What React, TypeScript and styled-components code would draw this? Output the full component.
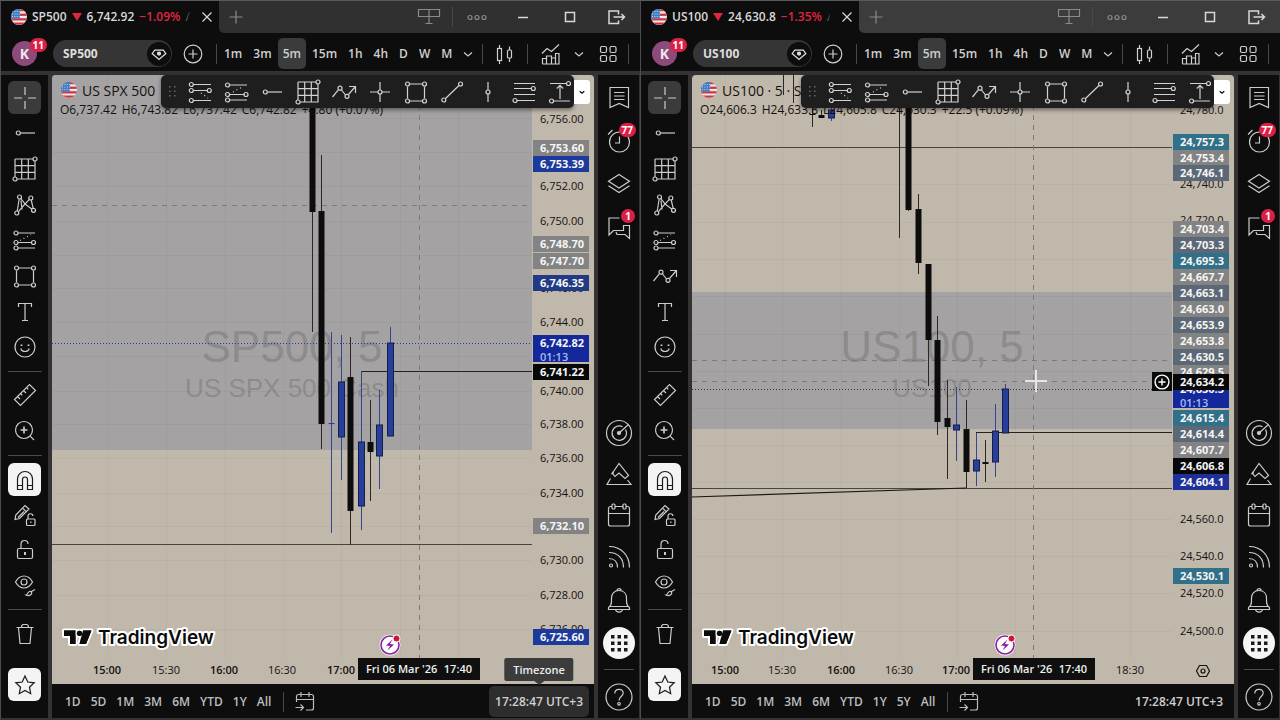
import React from "react";
import styled, { createGlobalStyle, css } from "styled-components";

const GlobalStyle = createGlobalStyle`
  *, *::before, *::after { box-sizing: border-box; }
  html, body { margin: 0; background: #2c2b2b; }
  body, button, input { font-family: "Open Sans", "Noto Sans", sans-serif; }
  button { border: 0; padding: 0; background: none; color: inherit; cursor: pointer; }
  svg { display: block; flex: none; }
  p { margin: 0; }
`;

/* ---------- icons ---------- */

const Dot = ({ x, y, r = 2 }: { x: number; y: number; r?: number }) => <circle cx={x} cy={y} r={r} />;

const icons: Record<string, React.ReactNode> = {
  cross: <path d="M14 3v8M14 17v8M3 14h8M17 14h8" />,
  crossNode: <><path d="M14 4v8M14 16v8M4 14h8M16 14h8" /><Dot x={14} y={14} /></>,
  hline: <><path d="M9.3 14H24" /><Dot x={7.3} y={14} /></>,
  vline: <><path d="M14 4v8M14 16v8" /><Dot x={14} y={14} /></>,
  grid: <><path d="M4 4h18M24 6v18H6M4 22V4M4 10.7h20M4 17.3h20M10.7 4v20M17.3 4v20" /><Dot x={24} y={4} /><Dot x={4} y={24} /></>,
  pattern: <><path d="M6.2 20 8.2 8M9.8 7.5 14 13l-6.6 7.6M14 13l4.4-4.6M20.2 9l2 8.4M14 13l7 5.2M10 9.500l1 9" /><Dot x={8.5} y={6} /><Dot x={19.8} y={7} /><Dot x={22.5} y={19.3} /><Dot x={5.8} y={22} /></>,
  fibA: <><path d="M7 7h17M7 16.500h13.500M7 22h17" /><path d="m9 14.500 11-6" strokeDasharray="1 3" /><Dot x={5} y={7} /><Dot x={5} y={16.5} /><Dot x={22.5} y={16.5} /><Dot x={5} y={22} /></>,
  fibB: <><path d="M7.300 6.500H25M7.300 12.500h14M7.300 22.500H25" /><path d="m15 15 7 5" strokeDasharray="1 3" /><Dot x={5.3} y={6.500} /><Dot x={5.3} y={12.5} /><Dot x={23.3} y={12.5} /><Dot x={5.3} y={22.5} /></>,
  fibC: <><path d="M7.500 7H25M7.500 16.500h15M7.500 22H25" /><path d="m11 14 10-5.500" strokeDasharray="1 3" /><Dot x={5.5} y={7} /><Dot x={5.5} y={16.5} /><Dot x={24} y={16.5} /><Dot x={5.5} y={22} /></>,
  rect: <><path d="M8 6h12M8 23h12M5.500 8.500v12M22.500 8.500v12" /><Dot x={5.5} y={6} /><Dot x={22.5} y={6} /><Dot x={5.5} y={23} /><Dot x={22.5} y={23} /></>,
  poly: <><path d="m2.500 19 6-7.300M11.500 12l4 5M18.500 16.500 25 9M19 8.500h6.500V15" /><Dot x={10} y={10.2} /><Dot x={17} y={18.3} /></>,
  trend: <><path d="M7.500 20.500 21 7.500" /><Dot x={22.5} y={6} /><Dot x={5.8} y={22} /></>,
  levels: <><path d="M4 5.500h21M4 10.500h17M4 16.500h21M7 22.500h18" /><Dot x={23.3} y={10.5} /><Dot x={5} y={22.5} /></>,
  range: <><path d="M4 5.500h17M7 23h17M14 8v13M10.800 10.500 14 7.300l3.200 3.200" /><Dot x={22.5} y={5.5} /><Dot x={5.5} y={23} /></>,
  text: <path d="M7.500 9V5.500h13V9M14 5.500V22M11 22.500h6" />,
  smile: <><circle cx="14" cy="14" r="10" /><path d="M9.800 15.500c.5 2.300 2 3 4.200 3s3.700-.7 4.200-3" /><path d="M10.500 11.500v1.500M17.500 11.500v1.500" strokeWidth="1.800" /></>,
  ruler: <path d="m3.500 18.500 15-15 6 6-15 15zM6.500 15.500l2.500 2.500M9.500 12.500l1.800 1.800M12.500 9.500l2.500 2.500M15.500 6.500l1.800 1.800" />,
  zoom: <><circle cx="13" cy="13" r="8.500" /><path d="m19.200 19.200 3.800 3.800" /><path d="M13 9.500v7M9.500 13h7" strokeWidth="1.700" /></>,
  magnet: <path d="M6.500 23.500V13a7.500 7.500 0 0 1 15 0v10.500h-5V13.500a2.500 2.500 0 0 0-5 0v10zM6.500 19.500h5M16.500 19.500h5" />,
  pencilLock: <><path d="m4 18.500.8-4.500L14 4.500l4 3.500-9.500 9.500zM11.500 7l4 4M7 16.500l6-6" /><rect x="15.500" y="18" width="8.500" height="6.500" rx="1" /><path d="M17 18v-2.500a2.500 2.500 0 0 1 5-.5M19.800 20.500v1.500" /></>,
  lock: <><rect x="6.500" y="12.500" width="15" height="10" rx="1.500" /><path d="M10 12.500V8.200C10 6 11.500 4.500 13.500 4.500S17 5.800 17 8" /><path d="M14 16v3" strokeWidth="2" /></>,
  eye: <><path d="M4.500 11C7 6.500 10 5 13 5s6 1.500 8.500 6c-2.500 4.500-5.500 6-8.500 6s-6-1.500-8.500-6z" /><circle cx="13" cy="11" r="3" /><path d="M15 24c2-.3 1.500-3 3.500-3.500s3 1.500 1.500 3-3.500 1.300-5 .5zM20.500 20.500l3.500-2" /></>,
  trash: <path d="M5.500 7.500h17M7.500 7.500l1.500 16h10l1.500-16M10.500 7.500C10.500 5.500 11 4.500 12.500 4.500h3c1.500 0 2 1 2 3" />,
  star: <path d="m14 5 2.800 6 6.400.8-4.700 4.400 1.200 6.500-5.700-3.200-5.700 3.200 1.200-6.500-4.700-4.400 6.400-.8z" />,
  notes: <path d="M5 4.500h18.500v20l-9.300-4-9.200 4zM9 9.500h10.500M9 13h10.500M9 16.500h10.500" />,
  alarm: <><circle cx="14.500" cy="15" r="10" /><path d="M14.500 9.500v6.500H10M3 7.500l4.500-4.500" /></>,
  layers: <path d="m14 4.500 10.500 6.700L14 18 3.500 11.200zM3.500 15.800 14 22.500l10.500-6.700" />,
  chat: <path d="M14.500 5H4v17l4.500-4.500h10V12M18.500 12.500h6v13L20 21.500h-8l-1-2.500" />,
  radar: <><circle cx="14" cy="14" r="12.500" /><path d="M20.500 10.500A7.200 7.200 0 1 1 17.500 7.700M14 14l9.500-8.500" /><circle cx="14" cy="14" r="1.500" fill="currentColor" /></>,
  ideas: <path d="m8.500 11.500 5.500-8 9.500 12-3.500 3-6-5.500-4 3.500-2-2.500zM8 11.800l-1.500 2.500M5.500 18.500l-3.500 6h24l-3.500-4.500" />,
  calendar: <><path d="M7 5.500H5.500a2 2 0 0 0-2 2V23a2 2 0 0 0 2 2h17a2 2 0 0 0 2-2V7.500a2 2 0 0 0-2-2H21M10 5.500h8M3.500 12.500h21" /><rect x="7" y="3" width="3" height="5" rx="1" /><rect x="18" y="3" width="3" height="5" rx="1" /></>,
  rss: <><path d="M4 3.500c12 0 20.500 8.500 20.500 21M4 9.500c9 0 14.500 6 14.500 15M4 15.500c5.500 0 8.500 3.500 8.500 9" /><circle cx="6" cy="22.500" r="1.500" /></>,
  bell: <path d="M3.500 21.500c2-1.500 3-3 3-6V12c0-4.500 3-7.500 7.500-7.500s7.500 3 7.500 7.500v3.500c0 3 1 4.500 3 6v2h-21zM4 20.500h20M12 4.500c0-2.500 4-2.500 4 0M10.500 23.500c.5 3.500 6.500 3.500 7 0" />,
  help: <><circle cx="14" cy="14" r="13" /><path d="M9.800 10.500c0-5.500 8.400-5.500 8.400-.5 0 3.500-4.200 3.500-4.200 7.500" /><circle cx="14" cy="20.800" r="1.300" /></>,
  apps: (
    <g fill="currentColor" stroke="none">
      {[6, 12.5, 19].map((y) => [6, 12.5, 19].map((x) => <rect key={`${x}-${y}`} x={x} y={y} width="3.500" height="3.500" />))}
    </g>
  ),
  chevron: <path d="m10 12.500 4 3.500 4-3.500" />,
  candles: <><rect x="6.500" y="8.500" width="4" height="12" /><path d="M8.500 5v3.500M8.500 20.500V24M18.500 6.500V10M18.500 18v4" /><rect x="16.500" y="10" width="4" height="8" rx="1" /></>,
  indicators: <path d="M6.500 24V18.500h4V24M10.500 24v-8h5v8M15.500 18h4v6M19.500 24V13.500h3.500V24zM6.500 24h14M6 13.500l5-5 4.500 3 7.500-7" />,
  layout: <><rect x="6.500" y="6.500" width="6" height="6" rx="1.500" /><rect x="16" y="6.500" width="6" height="6" rx="1.500" /><rect x="6.500" y="15.500" width="6" height="6" rx="1.500" /><rect x="16" y="15.500" width="6" height="6" rx="1.500" /></>,
  addCircle: <><circle cx="14" cy="14" r="8.800" /><path d="M14 9.500v9M9.500 14h9" /></>,
  plus: <path d="M14 7.500v13M7.500 14h13" />,
  close: <path d="m9.500 9.500 9 9M18.500 9.500l-9 9" />,
  board: <path d="M3.500 6.500h21v7h-21zM14 6.500V20M10.500 20.500h7" />,
  more: <><Dot x={7} y={14.5} /><Dot x={14} y={14.5} /><Dot x={21} y={14.5} /></>,
  minimise: <path d="M9 14.500h10" />,
  maximise: <rect x="9.500" y="9.500" width="9" height="9" />,
  exit: <path d="M16.500 11.500V8h-9.500v12.500h9.500V17.500M11.500 14h11M19.500 11l3 3-3 3" />,
  gem: <><path d="M9 9.500h10l3 4-8 7-8-7z" /><circle cx="14" cy="13.500" r="1.800" fill="currentColor" /></>,
  goto: <path d="M5.500 14V8.500a2 2 0 0 1 2-2h13a2 2 0 0 1 2 2V20a2 2 0 0 1-2 2H15M5.500 11.500h17M10 4v5M18 4v5M4.500 19.500h8M9.500 16.500l3 3-3 3" />,
  hexagon: <><path d="m10.500 8.500h7l3 5.500-3 5.500h-7L7.500 14z" /><circle cx="14" cy="14" r="2" /></>,
};

const Icon = ({ name, size = 28, weight = 1.2 }: { name: string; size?: number; weight?: number }) => (
  <svg width={size} height={size} viewBox="0 0 28 28" fill="none" stroke="currentColor" strokeWidth={weight} aria-hidden="true">
    {icons[name]}
  </svg>
);

const Flag = () => (
  <svg width="16" height="16" viewBox="0 0 16 16" aria-hidden="true">
    <defs><clipPath id="flag-round"><circle cx="8" cy="8" r="8" /></clipPath></defs>
    <g clipPath="url(#flag-round)">
      <rect width="16" height="16" fill="#eeeaea" />
      {[0, 4.600, 9.200, 13.500].map((y) => <rect key={y} y={y} width="16" height="2.300" fill="#c9384a" />)}
      <rect width="9" height="9.200" fill="#3b7fc4" />
      <path d="M1 2.500h8M1 5h8M1 7.500h8" stroke="#b9d4ef" strokeWidth="1" strokeDasharray="1 1.400" />
    </g>
  </svg>
);

/* ---------- layout ---------- */

const Desktop = styled.div`
  display: grid;
  grid-template-columns: repeat(2, minmax(0, 1fr));
  min-height: 100vh;
`;

const Win = styled.section`
  display: flex;
  flex-direction: column;
  min-width: 0;
  border-top: 1px solid #5a5a5a;
  border-left: 1px solid #4c4c4c;
  border-bottom: 2px solid #343232;
  background: #343232;
`;

const TitleBar = styled.header<{ $tone: string }>`
  display: flex;
  align-items: center;
  height: 32px;
  background: #0d0d0d;
  color: #d8d8d8;
  --tone: ${(p) => p.$tone};
`;

const Tab = styled.div`
  display: flex;
  align-items: center;
  gap: 5px;
  width: 218px;
  height: 100%;
  padding: 0 0 1px 10px;
  font-size: 12px;
  font-weight: 600;
  white-space: nowrap;
`;

const Faded = styled.span`
  flex: 1;
  overflow: hidden;
  background: linear-gradient(90deg, #777, #222);
  background-clip: text;
  color: transparent;
`;

const Down = styled.span`
  color: #e0253f;
`;

const Triangle = styled.span`
  border: 5px solid transparent;
  border-top: 8px solid #e0253f;
  border-bottom: 0;
`;

const TitleRest = styled.div`
  display: flex;
  flex: 1;
  align-items: center;
  height: 100%;
  border-bottom-left-radius: 5px;
  background: var(--tone);
`;

const IconButton = styled.button<{ $w?: number; $h?: number; $dim?: boolean }>`
  display: flex;
  align-items: center;
  justify-content: center;
  flex: none;
  width: ${(p) => p.$w ?? 28}px;
  height: ${(p) => p.$h ?? 28}px;
  color: ${(p) => (p.$dim ? "#8a8a8a" : "inherit")};
`;

const Spacer = styled.span`
  flex: 1;
`;

const VRule = styled.span<{ $h?: number; $gap?: number }>`
  flex: none;
  width: 1px;
  height: ${(p) => p.$h ?? 20}px;
  margin: 0 ${(p) => p.$gap ?? 8}px;
  background: #484848;
`;

const Toolbar = styled.nav`
  display: flex;
  align-items: center;
  height: 38px;
  margin-bottom: 4px;
  padding: 3px 11px 0 11px;
  background: #0d0d0d;
  color: #cfcfcf;
`;

const Avatar = styled.button`
  position: relative;
  flex: none;
  width: 25px;
  height: 25px;
  margin-right: 16px;
  border-radius: 50%;
  background: #8c4b78;
  color: #f2e9ef;
  font-size: 14px;
  font-weight: 700;
  line-height: 25px;
`;

const Badge = styled.span<{ $right: number; $top: number }>`
  position: absolute;
  top: ${(p) => p.$top}px;
  right: ${(p) => p.$right}px;
  min-width: 14px;
  padding: 0 3px;
  border-radius: 8px;
  background: #dc1f47;
  color: #fff;
  font-size: 10px;
  font-weight: 700;
  line-height: 14px;
  text-align: center;
`;

const SymbolSearch = styled.button`
  display: flex;
  align-items: center;
  justify-content: space-between;
  flex: none;
  width: 119px;
  height: 27px;
  padding: 0 1px 0 10px;
  border-radius: 14px;
  background: #353535;
  color: #dedede;
  font-size: 12px;
  font-weight: 700;
`;

const GemDisc = styled.span`
  display: flex;
  align-items: center;
  justify-content: center;
  width: 24px;
  height: 24px;
  border-radius: 50%;
  background: #0d0d0d;
`;

const Intervals = styled.div`
  display: flex;
  align-items: center;
  gap: 1px;
`;

const Interval = styled.button<{ $on?: boolean }>`
  height: 31px;
  padding: 0 5px;
  border-radius: 5px;
  background: ${(p) => (p.$on ? "#3b3b3b" : "transparent")};
  font-size: 12px;
  font-weight: 600;
`;

const Main = styled.div`
  display: grid;
  flex: 1;
  grid-template-columns: 47px minmax(0, 1fr) 41px;
  gap: 4px;
  padding-right: 1px;
`;

const Rail = styled.aside`
  display: flex;
  flex-direction: column;
  align-items: center;
  background: #0d0d0d;
  color: #cbcbcb;
`;

const ToolRail = styled(Rail)`
  padding: 6px 0 17px;
`;

const RailGroup = styled.div<{ $h?: number; $gap?: number }>`
  display: flex;
  flex-direction: column;
  align-items: center;
  justify-content: space-between;
  gap: ${(p) => p.$gap ?? 0}px;
  height: ${(p) => (p.$h ? `${p.$h}px` : "auto")};
`;

const Tool = styled.button<{ $kind?: "on" | "solid" }>`
  display: flex;
  align-items: center;
  justify-content: center;
  width: 33px;
  height: 33px;
  border-radius: 6px;
  ${(p) => p.$kind === "on" && css`background: #3b3b3b;`}
  ${(p) => p.$kind === "solid" && css`background: #f4f4f4; color: #1b1b1b;`}
`;

const HRule = styled.span<{ $m: string; $w?: number }>`
  flex: none;
  width: ${(p) => p.$w ?? 34}px;
  height: 1px;
  margin: ${(p) => p.$m};
  background: #4b4b4b;
`;

const SideButton = styled.button<{ $h: number }>`
  position: relative;
  display: flex;
  align-items: center;
  justify-content: center;
  width: 100%;
  height: ${(p) => p.$h}px;
`;

const AppsDisc = styled.span`
  display: flex;
  align-items: center;
  justify-content: center;
  width: 32px;
  height: 32px;
  border-radius: 50%;
  background: #f4f4f4;
  color: #1b1b1b;
`;

const Center = styled.main`
  display: flex;
  flex-direction: column;
  min-width: 0;
`;

const Chart = styled.div`
  position: relative;
  display: grid;
  flex: 1;
  grid-template: minmax(0, 1fr) 26px / minmax(0, 1fr) 62px;
  border-radius: 4px 4px 0 0;
  background: #c1b8ac;
  color: #15110e;
`;

const Plot = styled.div`
  position: relative;
  min-height: 583px;
  overflow: hidden;
  border-top-left-radius: 4px;
`;

const PlotSvg = styled.svg`
  position: absolute;
  inset: 0;
  width: 100%;
  height: 100%;
`;

const Legend = styled.div`
  position: absolute;
  top: 5px;
  left: 8px;
  white-space: nowrap;
`;

const LegendTitle = styled.h2`
  display: flex;
  align-items: center;
  gap: 5px;
  height: 20px;
  margin: 0;
  padding-left: 1px;
  font-size: 14px;
  font-weight: 400;
`;

const LegendValues = styled.p`
  display: flex;
  gap: 5px;
  font-size: 12px;
  line-height: 20px;
`;

const Logo = styled.svg`
  position: absolute;
  bottom: 7px;
  left: 10px;
`;

const EventMark = styled.svg`
  position: absolute;
  bottom: 1px;
`;

const AddOnScale = styled.button`
  position: absolute;
  right: 0;
  display: flex;
  align-items: center;
  justify-content: center;
  width: 20px;
  height: 19px;
  background: #0a0a0a;
  color: #fff;
`;

const PriceScale = styled.div`
  position: relative;
  font-size: 11px;
`;

const Price = styled.span<{ $bg?: string }>`
  position: absolute;
  left: 1px;
  width: 56px;
  padding-left: 7px;
  background: ${(p) => p.$bg ?? "transparent"};
  color: ${(p) => (p.$bg ? "#f5f5f5" : "inherit")};
  font-weight: ${(p) => (p.$bg ? 700 : 400)};
  line-height: 16px;
`;

const Countdown = styled.span`
  display: block;
  color: #a9b8f2;
  font-weight: 600;
  line-height: 11px;
`;

const TimeScale = styled.div`
  position: relative;
  font-size: 11px;
  font-weight: 600;
`;

const TimeLabel = styled.span<{ $light?: boolean }>`
  position: absolute;
  top: 4px;
  transform: translateX(-50%);
  font-weight: ${(p) => (p.$light ? 400 : 600)};
  line-height: 16px;
`;

const DateTag = styled.span`
  position: absolute;
  top: 0;
  display: flex;
  justify-content: space-between;
  width: 122px;
  padding: 0 8px;
  background: #0f0f0f;
  color: #f0f0f0;
  line-height: 22px;
  white-space: nowrap;
`;

const Corner = styled.div`
  display: flex;
  justify-content: center;
`;

const FloatWrap = styled.div`
  position: absolute;
  top: 0;
  left: 109px;
  display: flex;
  align-items: center;
`;

const DrawBar = styled.div`
  display: flex;
  align-items: center;
  gap: 8px;
  height: 33px;
  padding-left: 5px;
  border-radius: 5px;
  background: #1e1e1e;
  color: #d2d2d2;
  box-shadow: 0 2px 4px rgba(0, 0, 0, 0.45);
`;

const FavToggle = styled.button`
  display: flex;
  align-items: center;
  justify-content: center;
  width: 16px;
  height: 24px;
  border-radius: 0 3px 3px 0;
  background: #fff;
  color: #111;
`;

const BottomBar = styled.footer`
  display: flex;
  align-items: center;
  height: 34px;
  padding: 1px 5px 0 8px;
  background: #0d0d0d;
  color: #bdbdbd;
  font-size: 12px;
`;

const RangeButton = styled.button`
  padding: 0 5px;
  font-size: 12px;
  font-weight: 600;
`;

const ZoneButton = styled.button<{ $hover?: boolean }>`
  position: relative;
  height: 31px;
  padding: 0 6px;
  border-radius: 5px;
  background: ${(p) => (p.$hover ? "#2d2d2d" : "transparent")};
  color: #cfcfcf;
  font-size: 12px;
  font-weight: 600;
  white-space: nowrap;
`;

const Tooltip = styled.span`
  position: absolute;
  bottom: 36px;
  left: 50%;
  padding: 0 9px;
  transform: translateX(-50%);
  border-radius: 2px;
  background: #3c3c3c;
  color: #ececec;
  font-size: 11px;
  font-weight: 600;
  line-height: 23px;

  &::after {
    content: "";
    position: absolute;
    top: 100%;
    left: 50%;
    margin-left: -5px;
    border: 5px solid transparent;
    border-top: 4px solid #3c3c3c;
    border-bottom: 0;
  }
`;

/* ---------- data ---------- */

type Candle = { x: number; high: number; low: number; top: number; bottom: number; up?: boolean };
type PriceRow = { y: number; text: string; bg?: string; timer?: string };
type Line = { y: number; from?: number; kind: "solid" | "dash" | "dot"; color?: string };

type Market = {
  symbol: string;
  price: string;
  change: string;
  tone: string;
  title: string;
  values: string[];
  watermark: string;
  subtitle: string;
  zone: [number, number];
  crosshairX: number;
  candles: Candle[];
  lines: Line[];
  prices: PriceRow[];
  gridX: number[];
  gridY: number[];
  times: [number, string][];
  eventX: number;
  dateX: number;
  tools: string[];
  ranges: string[];
  cursor?: [number, number];
  zoneHover?: boolean;
};

const GRAY = "#838383";
const SLATE = "#5c6876";
const TEAL = "#326f88";
const BLUE = "#1c3a9c";
const LIVE = "#13289a";
const BLACK = "#080808";

const markets: Market[] = [
  {
    symbol: "SP500",
    price: "6,742.92",
    change: "−1.09%",
    tone: "#303030",
    title: "US SPX 500",
    values: ["O6,737.42", "H6,743.82", "L6,737.42", "C6,742.82", "+4.80 (+0.07%)"],
    watermark: "SP500, 5",
    subtitle: "US SPX 500 Cash",
    zone: [0, 375],
    crosshairX: 367,
    candles: [
      { x: 260, high: 0, low: 257, top: 0, bottom: 137 },
      { x: 269, high: 80, low: 374, top: 136, bottom: 349 },
      { x: 279, high: 257, low: 458, top: 348, bottom: 349, up: true },
      { x: 289, high: 260, low: 405, top: 307, bottom: 362, up: true },
      { x: 298, high: 262, low: 470, top: 302, bottom: 436 },
      { x: 309, high: 296, low: 455, top: 367, bottom: 431, up: true },
      { x: 318, high: 325, low: 426, top: 367, bottom: 377 },
      { x: 327, high: 315, low: 414, top: 350, bottom: 381, up: true },
      { x: 338, high: 252, low: 361, top: 268, bottom: 361, up: true },
    ],
    lines: [
      { y: 130, kind: "dash" },
      { y: 268, kind: "dot", color: "#2a3a9a" },
      { y: 296, from: 309, kind: "solid", color: "#222" },
      { y: 469, kind: "solid", color: "#4b443c" },
    ],
    prices: [
      { y: 44, text: "6,756.00" },
      { y: 73, text: "6,753.60", bg: GRAY },
      { y: 89, text: "6,753.39", bg: BLUE },
      { y: 111, text: "6,752.00" },
      { y: 146, text: "6,750.00" },
      { y: 169, text: "6,748.70", bg: GRAY },
      { y: 186, text: "6,747.70", bg: GRAY },
      { y: 213, text: "6,746.00" },
      { y: 208, text: "6,746.35", bg: "#213a86" },
      { y: 247, text: "6,744.00" },
      { y: 268, text: "6,742.82", bg: LIVE, timer: "01:13" },
      { y: 297, text: "6,741.22", bg: BLACK },
      { y: 316, text: "6,740.00" },
      { y: 349, text: "6,738.00" },
      { y: 383, text: "6,736.00" },
      { y: 418, text: "6,734.00" },
      { y: 451, text: "6,732.10", bg: GRAY },
      { y: 485, text: "6,730.00" },
      { y: 520, text: "6,728.00" },
      { y: 554, text: "6,726.00" },
      { y: 562, text: "6,725.60", bg: BLUE },
    ],
    gridX: [55, 114, 173, 231, 289, 348, 406],
    gridY: [43, 77, 111, 146, 180, 213, 247, 281, 316, 349, 383, 418, 451, 485, 520, 554],
    times: [[55, "15:00"], [114, "15:30"], [172, "16:00"], [230, "16:30"], [289, "17:00"]],
    eventX: 338,
    dateX: 306,
    tools: ["cross", "hline", "grid", "pattern", "fibA", "rect", "text", "smile"],
    ranges: ["1D", "5D", "1M", "3M", "6M", "YTD", "1Y", "All"],
    zoneHover: true,
  },
  {
    symbol: "US100",
    price: "24,630.8",
    change: "−1.35%",
    tone: "#3c3c3c",
    title: "US100 · 5 · S",
    values: ["O24,606.3", "H24,633.8", "L24,605.8", "C24,630.3", "+22.5 (+0.09%)"],
    watermark: "US100, 5",
    subtitle: "US100",
    zone: [217, 354],
    crosshairX: 341,
    candles: [
      { x: 91, high: 0, low: 20, top: 0, bottom: 0 },
      { x: 101, high: 0, low: 28, top: 0, bottom: 0 },
      { x: 120, high: 20, low: 52, top: 39, bottom: 40 },
      { x: 129, high: 35, low: 43, top: 40, bottom: 43 },
      { x: 139, high: 30, low: 46, top: 35, bottom: 43, up: true },
      { x: 207, high: 30, low: 163, top: 30, bottom: 30 },
      { x: 216, high: 0, low: 136, top: 0, bottom: 135 },
      { x: 226, high: 119, low: 199, top: 134, bottom: 188 },
      { x: 236, high: 189, low: 311, top: 189, bottom: 265 },
      { x: 245, high: 241, low: 360, top: 265, bottom: 347 },
      { x: 255, high: 305, low: 404, top: 343, bottom: 352 },
      { x: 264, high: 312, low: 386, top: 350, bottom: 355, up: true },
      { x: 274, high: 325, low: 413, top: 354, bottom: 397 },
      { x: 284, high: 358, low: 411, top: 385, bottom: 396, up: true },
      { x: 293, high: 365, low: 407, top: 387, bottom: 389 },
      { x: 303, high: 329, low: 402, top: 356, bottom: 387, up: true },
      { x: 313, high: 309, low: 358, top: 314, bottom: 358, up: true },
    ],
    lines: [
      { y: 72, kind: "solid", color: "#4b443c" },
      { y: 285, kind: "dash" },
      { y: 306, kind: "dash" },
      { y: 314, kind: "dot", color: "#33334a" },
      { y: 357, from: 284, kind: "solid", color: "#222" },
      { y: 413, kind: "solid", color: "#4b443c" },
    ],
    prices: [
      { y: 35, text: "24,780.0" },
      { y: 109, text: "24,740.0" },
      { y: 145, text: "24,720.0" },
      { y: 67, text: "24,757.3", bg: TEAL },
      { y: 83, text: "24,753.4", bg: GRAY },
      { y: 98, text: "24,746.1", bg: SLATE },
      { y: 154, text: "24,703.4", bg: GRAY },
      { y: 170, text: "24,703.3", bg: SLATE },
      { y: 186, text: "24,695.3", bg: TEAL },
      { y: 202, text: "24,667.7", bg: GRAY },
      { y: 218, text: "24,663.1", bg: SLATE },
      { y: 234, text: "24,663.0", bg: GRAY },
      { y: 250, text: "24,653.9", bg: SLATE },
      { y: 266, text: "24,653.8", bg: GRAY },
      { y: 297, text: "24,629.5", bg: GRAY },
      { y: 282, text: "24,630.5", bg: SLATE },
      { y: 314, text: "24,630.3", bg: LIVE, timer: "01:13" },
      { y: 307, text: "24,634.2", bg: BLACK },
      { y: 343, text: "24,615.4", bg: TEAL },
      { y: 359, text: "24,614.4", bg: SLATE },
      { y: 375, text: "24,607.7", bg: GRAY },
      { y: 391, text: "24,606.8", bg: BLACK },
      { y: 407, text: "24,604.1", bg: "#20309a" },
      { y: 444, text: "24,560.0" },
      { y: 481, text: "24,540.0" },
      { y: 501, text: "24,530.1", bg: TEAL },
      { y: 518, text: "24,520.0" },
      { y: 556, text: "24,500.0" },
    ],
    gridX: [33, 90, 149, 207, 265, 323, 380, 438],
    gridY: [34, 72, 109, 147, 184, 221, 259, 296, 333, 370, 407, 444, 481, 518, 556],
    times: [[33, "15:00"], [90, "15:30"], [149, "16:00"], [207, "16:30"], [264, "17:00"], [438, "18:30"]],
    eventX: 313,
    dateX: 281,
    tools: ["cross", "hline", "grid", "pattern", "fibA", "poly", "text", "smile"],
    ranges: ["1D", "5D", "1M", "3M", "6M", "YTD", "1Y", "5Y", "All"],
    cursor: [344, 306],
  },
];

const drawTools = ["fibB", "fibC", "hline", "grid", "poly", "crossNode", "rect", "trend", "vline", "levels", "range"];
const intervals = ["1m", "3m", "5m", "15m", "1h", "4h", "D", "W", "M"];

/* ---------- parts ---------- */

const PlotCanvas = ({ m }: { m: Market }) => (
  <PlotSvg role="img" aria-label={`${m.symbol} five minute candles`}>
    <rect x="0" y={m.zone[0]} width="100%" height={m.zone[1] - m.zone[0]} fill="#a4a2a3" />
    {m.gridX.map((x) => <line key={x} x1={x + 0.5} x2={x + 0.5} y1="0" y2="100%" stroke="#000" strokeOpacity="0.03" />)}
    {m.gridY.map((y) => <line key={y} x1="0" x2="100%" y1={y + 0.5} y2={y + 0.5} stroke="#000" strokeOpacity="0.03" />)}
    <g fill="#4a474a" fillOpacity="0.27" textAnchor="middle" fontFamily='"Liberation Sans", Arial, sans-serif'>
      <text x="50%" y="287" fontSize="44">{m.watermark}</text>
      <text x="50%" y="322" fontSize="26">{m.subtitle}</text>
    </g>
    {m.lines.map((l) => (
      <line
        key={l.y}
        x1={l.from ?? 0}
        x2="100%"
        y1={l.y + 0.5}
        y2={l.y + 0.5}
        stroke={l.color ?? "#807b78"}
        strokeDasharray={l.kind === "dash" ? "5 5" : l.kind === "dot" ? "1 2" : undefined}
      />
    ))}
    <line x1={m.crosshairX + 0.5} x2={m.crosshairX + 0.5} y1="0" y2="100%" stroke="#807b78" strokeDasharray="5 5" />
    {m.cursor && <line x1="0" x2="274" y1="422" y2="413" stroke="#1c1916" strokeWidth="1.200" />}
    {m.candles.map((c) => (
      <g key={c.x}>
        <line x1={c.x + 0.5} x2={c.x + 0.5} y1={c.high} y2={c.low} stroke={c.up ? "#35468f" : "#2a2725"} />
        {c.bottom > c.top && (
          <rect x={c.x - 2.5} y={c.top} width="6" height={c.bottom - c.top} fill={c.up ? "#273f9b" : "#0e0d0d"} stroke={c.up && c.bottom - c.top > 3 ? "#151d4a" : "none"} strokeWidth="1" />
        )}
      </g>
    ))}
    {m.cursor && (
      <path d={`M${m.cursor[0] - 11} ${m.cursor[1]}h22M${m.cursor[0]} ${m.cursor[1] - 11}v22`} stroke="#e8e6e3" strokeWidth="2" />
    )}
  </PlotSvg>
);

const Brand = () => (
  <Logo width="156" height="28" viewBox="0 0 156 28" role="img" aria-label="TradingView">
    <g fill="#0c0c0c" stroke="#fff" strokeWidth="4" strokeLinejoin="round" paintOrder="stroke">
      <path d="M2 7.500h11.500v13.500H8v-8H2zM21 7.500h8.500L24 21h-6.500z" />
      <circle cx="17.500" cy="10.300" r="2.600" />
      <text x="36" y="21" fontFamily="Inter, sans-serif" fontWeight="600" fontSize="19">TradingView</text>
    </g>
    <path d="M2 7.500h11.500v13.500H8v-8H2zM21 7.500h8.500L24 21h-6.500z" fill="#0c0c0c" />
    <circle cx="17.500" cy="10.300" r="2.600" fill="#0c0c0c" />
  </Logo>
);

const TerminalWindow = ({ m }: { m: Market }) => (
  <Win aria-label={m.symbol}>
    <TitleBar $tone={m.tone}>
      <Tab>
        <Flag />
        <span>{m.symbol}</span>
        <Triangle />
        <span>{m.price}</span>
        <Down>{m.change}</Down>
        <Faded>/ N</Faded>
        <IconButton $w={24} aria-label="Close tab"><Icon name="close" /></IconButton>
      </Tab>
      <TitleRest>
        <IconButton $w={34} $dim aria-label="New tab"><Icon name="plus" /></IconButton>
        <Spacer />
        <IconButton $w={40} $dim aria-label="Layouts"><Icon name="board" /></IconButton>
        <VRule $gap={3} />
        <IconButton $w={42} $dim aria-label="More"><Icon name="more" /></IconButton>
        <IconButton $w={50} aria-label="Minimise"><Icon name="minimise" weight={1.5} /></IconButton>
        <IconButton $w={44} aria-label="Maximise"><Icon name="maximise" weight={1.5} /></IconButton>
        <IconButton $w={48} aria-label="Exit"><Icon name="exit" weight={1.5} /></IconButton>
      </TitleRest>
    </TitleBar>

    <Toolbar aria-label="Chart toolbar">
      <Avatar aria-label="Account, 11 notifications">K<Badge $right={-10} $top={-3}>11</Badge></Avatar>
      <SymbolSearch>{m.symbol}<GemDisc><Icon name="gem" size={24} weight={1.4} /></GemDisc></SymbolSearch>
      <IconButton $w={42} aria-label="Compare"><Icon name="addCircle" /></IconButton>
      <VRule $gap={2} />
      <Spacer />
      <Intervals>
        {intervals.map((i) => <Interval key={i} $on={i === "5m"}>{i}</Interval>)}
      </Intervals>
      <IconButton $w={22} aria-label="More intervals"><Icon name="chevron" /></IconButton>
      <VRule $gap={3} />
      <IconButton $w={38} aria-label="Chart type"><Icon name="candles" /></IconButton>
      <VRule $gap={3} />
      <IconButton $w={38} aria-label="Indicators"><Icon name="indicators" /></IconButton>
      <IconButton $w={20} aria-label="Indicator templates"><Icon name="chevron" /></IconButton>
      <IconButton $w={38} aria-label="Layout"><Icon name="layout" /></IconButton>
      <VRule $gap={1} />
    </Toolbar>

    <Main>
      <ToolRail aria-label="Drawing tools">
        <RailGroup $h={283}>
          {m.tools.map((t, i) => <Tool key={t} aria-label={t} $kind={i === 0 ? "on" : undefined}><Icon name={t} /></Tool>)}
        </RailGroup>
        <HRule $m="7px 0 6px" />
        <RailGroup $gap={3}>
          <Tool aria-label="Measure"><Icon name="ruler" /></Tool>
          <Tool aria-label="Zoom in"><Icon name="zoom" /></Tool>
        </RailGroup>
        <HRule $m="8px 0 7px" />
        <RailGroup $gap={2}>
          <Tool $kind="solid" aria-label="Magnet"><Icon name="magnet" /></Tool>
          <Tool aria-label="Stay in drawing mode"><Icon name="pencilLock" /></Tool>
          <Tool aria-label="Lock drawings"><Icon name="lock" /></Tool>
          <Tool aria-label="Hide drawings"><Icon name="eye" /></Tool>
        </RailGroup>
        <HRule $m="8px 0 7px" />
        <Tool aria-label="Remove"><Icon name="trash" /></Tool>
        <Spacer />
        <Tool $kind="solid" aria-label="Favourites"><Icon name="star" /></Tool>
      </ToolRail>

      <Center>
        <Chart>
          <Plot>
            <PlotCanvas m={m} />
            <Legend>
              <LegendTitle><Flag />{m.title}</LegendTitle>
              <LegendValues>{m.values.map((v) => <span key={v}>{v}</span>)}</LegendValues>
            </Legend>
            <Brand />
            <EventMark width="24" height="24" viewBox="0 0 24 24" style={{ left: m.eventX - 12 }} role="img" aria-label="Event">
              <circle cx="12" cy="12" r="10.500" fill="#fff" />
              <circle cx="12" cy="12" r="9" fill="#fff" stroke="#8a1fa3" strokeWidth="1.600" />
              <path d="M14.500 6.500 8 12.500l4 .5-2.500 4.500L16 11.500l-4-.5z" fill="#8a1fa3" />
              <circle cx="18.500" cy="5.500" r="3.500" fill="#c8163a" stroke="#fff" />
            </EventMark>
            {m.cursor && (
              <AddOnScale style={{ top: m.cursor[1] - 9 }} aria-label="Add at price"><Icon name="addCircle" size={22} weight={1.800} /></AddOnScale>
            )}
          </Plot>
          <PriceScale>
            {m.prices.map((p) => (
              <Price key={p.text} $bg={p.bg} style={{ top: p.y - 8 }}>
                {p.text}
                {p.timer && <Countdown>{p.timer}</Countdown>}
              </Price>
            ))}
          </PriceScale>
          <TimeScale>
            {m.times.map(([x, t]) => <TimeLabel key={t} $light={t.endsWith("30")} style={{ left: x }}>{t}</TimeLabel>)}
            <DateTag style={{ left: m.dateX }}><span>Fri 06 Mar '26</span><span>17:40</span></DateTag>
          </TimeScale>
          <Corner>
            {!m.zoneHover && <IconButton $h={26} aria-label="Scale settings"><Icon name="hexagon" /></IconButton>}
          </Corner>
          <FloatWrap>
            <DrawBar>
              <svg width="12" height="16" viewBox="0 0 12 16" fill="#666" aria-hidden="true">
                {[2, 6.500, 11].map((y) => [3, 8].map((x) => <rect key={`${x}${y}`} x={x} y={y} width="1.500" height="1.500" />))}
              </svg>
              {drawTools.map((t) => <IconButton key={t} aria-label={t}><Icon name={t} /></IconButton>)}
            </DrawBar>
            <FavToggle aria-label="More favourites"><Icon name="chevron" size={16} weight={2.4} /></FavToggle>
          </FloatWrap>
        </Chart>
        <BottomBar>
          {m.ranges.map((r) => <RangeButton key={r}>{r}</RangeButton>)}
          <VRule $gap={7} />
          <IconButton aria-label="Go to date"><Icon name="goto" /></IconButton>
          <Spacer />
          <ZoneButton $hover={m.zoneHover}>
            17:28:47 UTC+3
            {m.zoneHover && <Tooltip role="tooltip">Timezone</Tooltip>}
          </ZoneButton>
        </BottomBar>
      </Center>

      <Rail aria-label="Panels">
        <SideButton $h={44} aria-label="Watchlist"><Icon name="notes" /></SideButton>
        <SideButton $h={43} aria-label="Alerts, 77"><Icon name="alarm" /><Badge $right={3} $top={4}>77</Badge></SideButton>
        <SideButton $h={43} aria-label="Object tree"><Icon name="layers" /></SideButton>
        <SideButton $h={43} aria-label="Chats, 1"><Icon name="chat" /><Badge $right={4} $top={4}>1</Badge></SideButton>
        <Spacer />
        <SideButton $h={41} aria-label="Screener"><Icon name="radar" /></SideButton>
        <SideButton $h={41} aria-label="Ideas"><Icon name="ideas" /></SideButton>
        <SideButton $h={41} aria-label="Calendar"><Icon name="calendar" /></SideButton>
        <SideButton $h={43} aria-label="News"><Icon name="rss" /></SideButton>
        <SideButton $h={43} aria-label="Notifications"><Icon name="bell" /></SideButton>
        <SideButton $h={43} aria-label="Products"><AppsDisc><Icon name="apps" /></AppsDisc></SideButton>
        <HRule $m="5px 0" $w={30} />
        <SideButton $h={43} aria-label="Help"><Icon name="help" /></SideButton>
      </Rail>
    </Main>
  </Win>
);

export default function App() {
  return (
    <>
      <GlobalStyle />
      <Desktop>
        {markets.map((m) => <TerminalWindow key={m.symbol} m={m} />)}
      </Desktop>
    </>
  );
}
